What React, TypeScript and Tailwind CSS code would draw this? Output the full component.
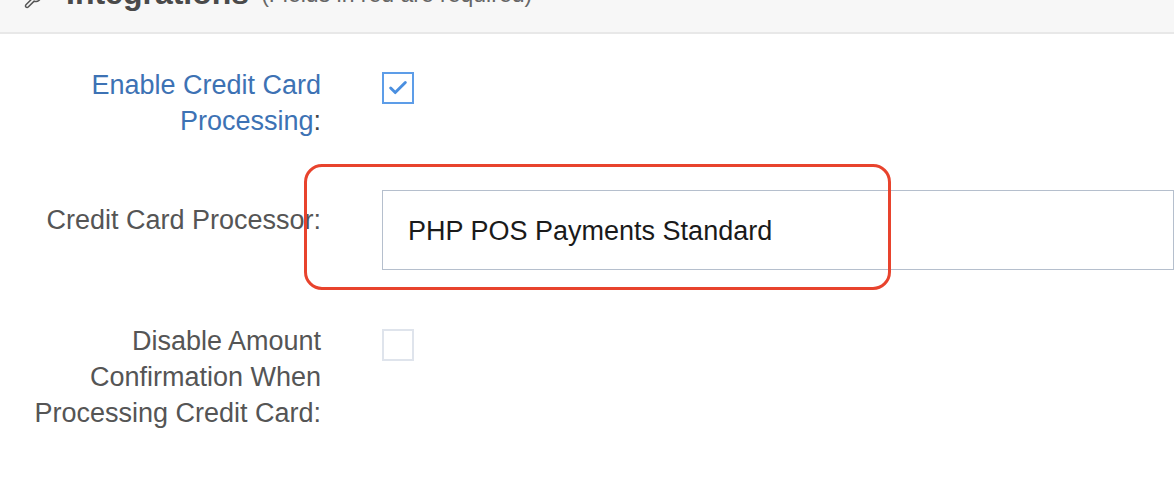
import { Check, Wrench } from 'lucide-react';

const font = { fontFamily: '"Liberation Sans", Arial, sans-serif' };

function Checkbox({ checked }: { checked: boolean }) {
  return checked ? (
    <div className="flex h-[32px] w-[32px] items-center justify-center border-2 border-[#5d9de8] bg-white">
      <Check className="h-[22px] w-[22px] text-[#4a8fe0]" strokeWidth={3.2} />
    </div>
  ) : (
    <div className="h-[32px] w-[32px] border-2 border-[#dfe4ec] bg-white" />
  );
}

export default function App() {
  return (
    <div className="min-h-screen w-[1174px] overflow-hidden bg-white" style={font}>
      {/* panel heading, mostly scrolled off the top */}
      <header className="h-[34px] overflow-hidden border-b-2 border-[#e8e8e8] bg-[#f7f7f7]">
        <div className="-mt-[27px] flex items-end gap-3 pl-[24px]">
          <Wrench className="mb-[4px] h-[18px] w-[18px] text-[#555]" />
          <h1 className="ml-[12px] text-[32px] leading-[40px] font-bold text-[#4a4a4a]">
            Integrations
          </h1>
          <span className="mb-[2px] text-[23px] text-[#666]">(Fields in red are required)</span>
        </div>
      </header>

      <main className="pt-[33px] text-[27px] leading-[36px]">
        {/* Enable credit card processing */}
        <div className="flex items-start">
          <label className="w-[321px] pl-[21px] text-right text-[#3d72b4]">
            Enable Credit Card Processing<span className="text-[#444]">:</span>
          </label>
          <div className="ml-[61px] mt-[5px]">
            <Checkbox checked />
          </div>
        </div>

        {/* Processor select */}
        <div className="relative mt-[51px] flex items-start">
          <label className="w-[321px] pt-[12px] pl-[21px] text-right text-[#555]">
            Credit Card Processor:
          </label>
          <div className="ml-[61px] flex h-[80px] flex-1 items-center border border-[#b5bfcd] bg-white pl-[25px] pt-[2px] text-[#1a1a1a]">
            PHP POS Payments Standard
          </div>
          {/* red annotation box */}
          <div className="pointer-events-none absolute left-[304px] top-[-26px] h-[126px] w-[587px] rounded-[18px] border-[3px] border-[#e8432d]" />
        </div>

        {/* Disable amount confirmation */}
        <div className="mt-[53px] flex items-start">
          <label className="w-[321px] pl-[21px] text-right text-[#555]">
            Disable Amount Confirmation When Processing Credit Card:
          </label>
          <div className="ml-[61px] mt-[6px]">
            <Checkbox checked={false} />
          </div>
        </div>
      </main>
    </div>
  );
}
